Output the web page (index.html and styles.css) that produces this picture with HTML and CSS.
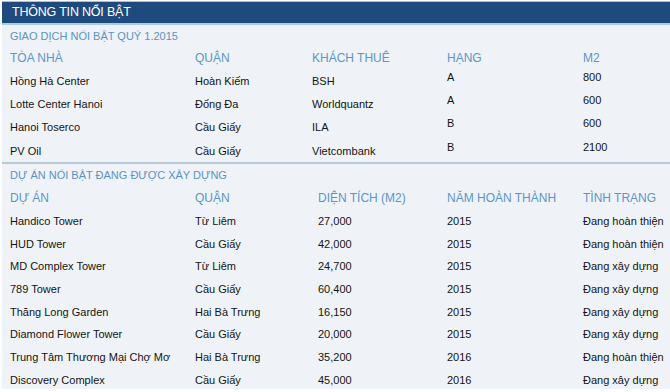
FILE: index.html
```html
<!DOCTYPE html>
<html lang="vi">
<head>
<meta charset="utf-8">
<title>Thông tin nổi bật</title>
<link rel="stylesheet" href="styles.css">
</head>
<body>
<div class="panel">
  <div class="bar">THÔNG TIN NỔI BẬT</div>

  <section class="sec sec1">
    <div class="subtitle">GIAO DỊCH NỔI BẬT QUÝ 1.2015</div>
    <div class="grid g1 head">
      <div>TÒA NHÀ</div><div>QUẬN</div><div>KHÁCH THUÊ</div><div>HẠNG</div><div>M2</div>
    </div>
    <div class="grid g1 row"><div>Hồng Hà Center</div><div>Hoàn Kiếm</div><div>BSH</div><div class="up">A</div><div class="up">800</div></div>
    <div class="grid g1 row"><div>Lotte Center Hanoi</div><div>Đống Đa</div><div>Worldquantz</div><div class="up">A</div><div class="up">600</div></div>
    <div class="grid g1 row"><div>Hanoi Toserco</div><div>Cầu Giấy</div><div>ILA</div><div class="up">B</div><div class="up">600</div></div>
    <div class="grid g1 row"><div>PV Oil</div><div>Cầu Giấy</div><div>Vietcombank</div><div class="up">B</div><div class="up">2100</div></div>
  </section>

  <section class="sec sec2">
    <div class="subtitle">DỰ ÁN NỔI BẬT ĐANG ĐƯỢC XÂY DỰNG</div>
    <div class="grid g2 head">
      <div>DỰ ÁN</div><div>QUẬN</div><div>DIỆN TÍCH (M2)</div><div>NĂM HOÀN THÀNH</div><div>TÌNH TRẠNG</div>
    </div>
    <div class="grid g2 row2"><div>Handico Tower</div><div>Từ Liêm</div><div>27,000</div><div>2015</div><div>Đang hoàn thiện</div></div>
    <div class="grid g2 row2"><div>HUD Tower</div><div>Cầu Giấy</div><div>42,000</div><div>2015</div><div>Đang hoàn thiện</div></div>
    <div class="grid g2 row2"><div>MD Complex Tower</div><div>Từ Liêm</div><div>24,700</div><div>2015</div><div>Đang xây dựng</div></div>
    <div class="grid g2 row2"><div>789 Tower</div><div>Cầu Giấy</div><div>60,400</div><div>2015</div><div>Đang xây dựng</div></div>
    <div class="grid g2 row2"><div>Thăng Long Garden</div><div>Hai Bà Trưng</div><div>16,150</div><div>2015</div><div>Đang xây dựng</div></div>
    <div class="grid g2 row2"><div>Diamond Flower Tower</div><div>Cầu Giấy</div><div>20,000</div><div>2015</div><div>Đang xây dựng</div></div>
    <div class="grid g2 row2"><div>Trung Tâm Thương Mại Chợ Mơ</div><div>Hai Bà Trưng</div><div>35,200</div><div>2016</div><div>Đang hoàn thiện</div></div>
    <div class="grid g2 row2"><div>Discovery Complex</div><div>Cầu Giấy</div><div>45,000</div><div>2016</div><div>Đang xây dựng</div></div>
  </section>
</div>
</body>
</html>
```

FILE: styles.css
```css
* { box-sizing: border-box; }
html, body {
  margin: 0;
  padding: 0;
  background: #ffffff;
}
body {
  font-family: "Liberation Sans", Arial, sans-serif;
  color: #141414;
  width: 670px;
  height: 392px;
  overflow: hidden;
}
.panel {
  margin-left: 2px;
  margin-top: 1px;
  height: 388px;
  background: #eff3f7;
}
.bar {
  height: 24px;
  background: #1f4a7d;
  border-top: 1px solid #a9c2d8;
  border-bottom: 2px solid #a9cbe3;
  color: #ffffff;
  font-size: 12.5px;
  line-height: 21px;
  padding-left: 10px;
  letter-spacing: -0.2px;
}
.subtitle {
  height: 22px;
  line-height: 22px;
  font-size: 11px;
  color: #5a92c6;
  padding-left: 8px;
}
.grid {
  display: grid;
  align-items: center;
  padding-left: 8px;
}
.g1 { grid-template-columns: 185px 117px 135px 136px 1fr; }
.g2 { grid-template-columns: 185px 123px 129px 136px 1fr; }
.head {
  font-size: 12px;
  color: #5c95c9;
  height: 22px;
}
.row {
  font-size: 11px;
  height: 23.3px;
}
.row .up { padding-bottom: 8px; }
.sec1 {
  border-bottom: 2px solid #b6c9d8;
}
.sec2 .head { height: 23.5px; }
.row2 {
  font-size: 11px;
  height: 22.7px;
}
```
